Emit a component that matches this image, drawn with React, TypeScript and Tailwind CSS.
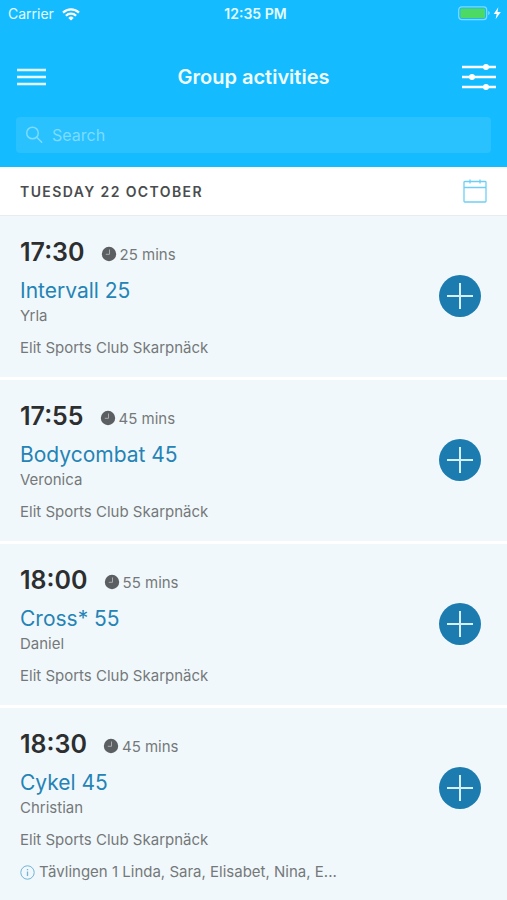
interface Activity {
  time: string;
  duration: string;
  title: string;
  instructor: string;
  club: string;
  note?: string;
}

const activities: Activity[] = [
  { time: '17:30', duration: '25 mins', title: 'Intervall 25', instructor: 'Yrla', club: 'Elit Sports Club Skarpnäck' },
  { time: '17:55', duration: '45 mins', title: 'Bodycombat 45', instructor: 'Veronica', club: 'Elit Sports Club Skarpnäck' },
  { time: '18:00', duration: '55 mins', title: 'Cross* 55', instructor: 'Daniel', club: 'Elit Sports Club Skarpnäck' },
  {
    time: '18:30',
    duration: '45 mins',
    title: 'Cykel 45',
    instructor: 'Christian',
    club: 'Elit Sports Club Skarpnäck',
    note: 'Tävlingen 1 Linda, Sara, Elisabet, Nina, E...',
  },
];

function StatusBar() {
  return (
    <div className="grid h-7 grid-cols-3 items-center pl-2 pr-1 text-sm text-[#e4fbff]">
      <div className="flex items-center gap-2">
        <span>Carrier</span>
        <svg width="18" height="13" viewBox="0 0 18 13" fill="none" stroke="#fff" strokeWidth="2.2" aria-hidden="true">
          <path d="M1 4.6a11.4 11.4 0 0 1 16 0" />
          <path d="M3.9 7.7a7.2 7.2 0 0 1 10.2 0" />
          <path d="M9 12.6 6.3 9.9a3.9 3.9 0 0 1 5.4 0z" fill="#fff" stroke="none" />
        </svg>
      </div>
      <span className="text-center font-semibold">12:35 PM</span>
      <svg className="justify-self-end" width="45" height="16" viewBox="0 0 45 16" aria-hidden="true">
        <rect x="0.7" y="0.8" width="28" height="12.8" rx="3" fill="none" stroke="#7fdcff" strokeWidth="1.2" />
        <rect x="2.4" y="2.5" width="24.6" height="9.4" rx="1.2" fill="#4cd964" />
        <path d="M30.2 5v4.2q1.6-.5 1.6-2.1T30.2 5z" fill="#7fdcff" />
        <path d="M40.3 1.3 35.7 8h3l-1.1 5.3L42.8 6h-3.3z" fill="#fff" />
      </svg>
    </div>
  );
}

function Header() {
  return (
    <header className="bg-[#14bbff] pb-3.5">
      <StatusBar />
      <div className="flex h-22 items-center justify-between pl-4 pr-2.5 pt-2.5">
        <button type="button" aria-label="Menu" className="flex w-[30px] items-center">
          <svg width="30" height="20" viewBox="0 0 30 20" stroke="#e6fdff" strokeWidth="2.4" aria-hidden="true">
            <path d="M1 3h29M1 10h29M1 17h29" />
          </svg>
        </button>
        <h1 className="text-xl font-semibold text-[#effdff]">Group activities</h1>
        <button type="button" aria-label="Filter" className="flex w-9 items-center justify-end">
          <svg width="36" height="28" viewBox="0 0 36 28" stroke="#fff" strokeWidth="2.4" fill="#fff" aria-hidden="true">
            <path d="M1 4h34M1 14h34M1 24h34" />
            <g stroke="none">
              <circle cx="25" cy="4" r="3" />
              <circle cx="11" cy="14" r="3" />
              <circle cx="25" cy="24" r="3" />
            </g>
          </svg>
        </button>
      </div>
      <label className="mx-4 mt-px flex h-9 items-center gap-2 rounded bg-[#29c2ff] pl-2">
        <svg width="20" height="20" viewBox="0 0 20 20" fill="none" stroke="#7cdbff" strokeWidth="1.5" aria-hidden="true">
          <circle cx="8.5" cy="8" r="5.8" />
          <path d="m12.7 12.3 5 4.9" strokeLinecap="round" />
        </svg>
        <input
          type="search"
          aria-label="Search"
          placeholder="Search"
          className="min-w-0 flex-1 bg-transparent text-base text-white outline-none placeholder:text-[#7cdbff]"
        />
      </label>
    </header>
  );
}

function ActivityRow({ activity }: { activity: Activity }) {
  return (
    <li className="flex items-start justify-between border-b-3 border-white bg-[#f1f8fb] pb-[19px] pl-5 pr-[26px] pt-5">
      <div className="min-w-0 text-[15px] leading-5 text-[#75787a]">
        <div className="flex h-8 items-center">
          <time className="text-[25px] leading-8 font-semibold text-[#2c2e30]">{activity.time}</time>
          <svg className="ml-4 mt-1" width="16" height="16" viewBox="0 0 16 16" aria-hidden="true">
            <circle cx="8" cy="8" r="7.2" fill="#5c5f61" />
            <path d="M8.5 3.5v4.8H4.8" fill="none" stroke="#a9acae" strokeWidth="1" />
          </svg>
          <span className="ml-[3px] mt-1.5">{activity.duration}</span>
        </div>
        <h2 className="mt-[9px] text-[21px] leading-7 text-[#2583b6]">{activity.title}</h2>
        <p className="mt-px">{activity.instructor}</p>
        <p className="mt-3">{activity.club}</p>
        {activity.note && (
          <p className="mt-3 flex items-center gap-1">
            <svg width="15" height="15" viewBox="0 0 15 15" fill="none" stroke="#6fb3d8" aria-hidden="true">
              <circle cx="7.5" cy="7.5" r="6.7" />
              <path d="M7.5 6.5v4.5M7.5 4v1.3" strokeWidth="1.3" />
            </svg>
            <span className="truncate">{activity.note}</span>
          </p>
        )}
      </div>
      <button
        type="button"
        aria-label={`Book ${activity.title}`}
        className="mt-[39px] flex size-[42px] shrink-0 items-center justify-center rounded-full bg-[#1c7cb0]"
      >
        <svg width="26" height="26" viewBox="0 0 26 26" stroke="#d5f0fb" strokeWidth="2" aria-hidden="true">
          <path d="M13 0v26M0 13h26" />
        </svg>
      </button>
    </li>
  );
}

export default function App() {
  return (
    <div className="min-h-screen bg-[#f1f8fb] font-['Inter',sans-serif]">
      <Header />
      <div className="flex h-[49px] items-center justify-between border-b border-[#e6ecef] bg-white px-5">
        <h2 className="pt-0.5 text-sm font-semibold tracking-widest text-[#4a4c4e]">TUESDAY 22 OCTOBER</h2>
        <button type="button" aria-label="Choose date">
          <svg width="24" height="24" viewBox="0 0 24 24" fill="none" stroke="#6dcff6" strokeWidth="1.3" aria-hidden="true">
            <rect x="1" y="2.5" width="22" height="20.5" rx="0.8" />
            <path d="M1 8.5h22M7 .5v4M17 .5v4" />
          </svg>
        </button>
      </div>
      <ul>
        {activities.map((activity) => (
          <ActivityRow key={activity.time} activity={activity} />
        ))}
      </ul>
    </div>
  );
}
